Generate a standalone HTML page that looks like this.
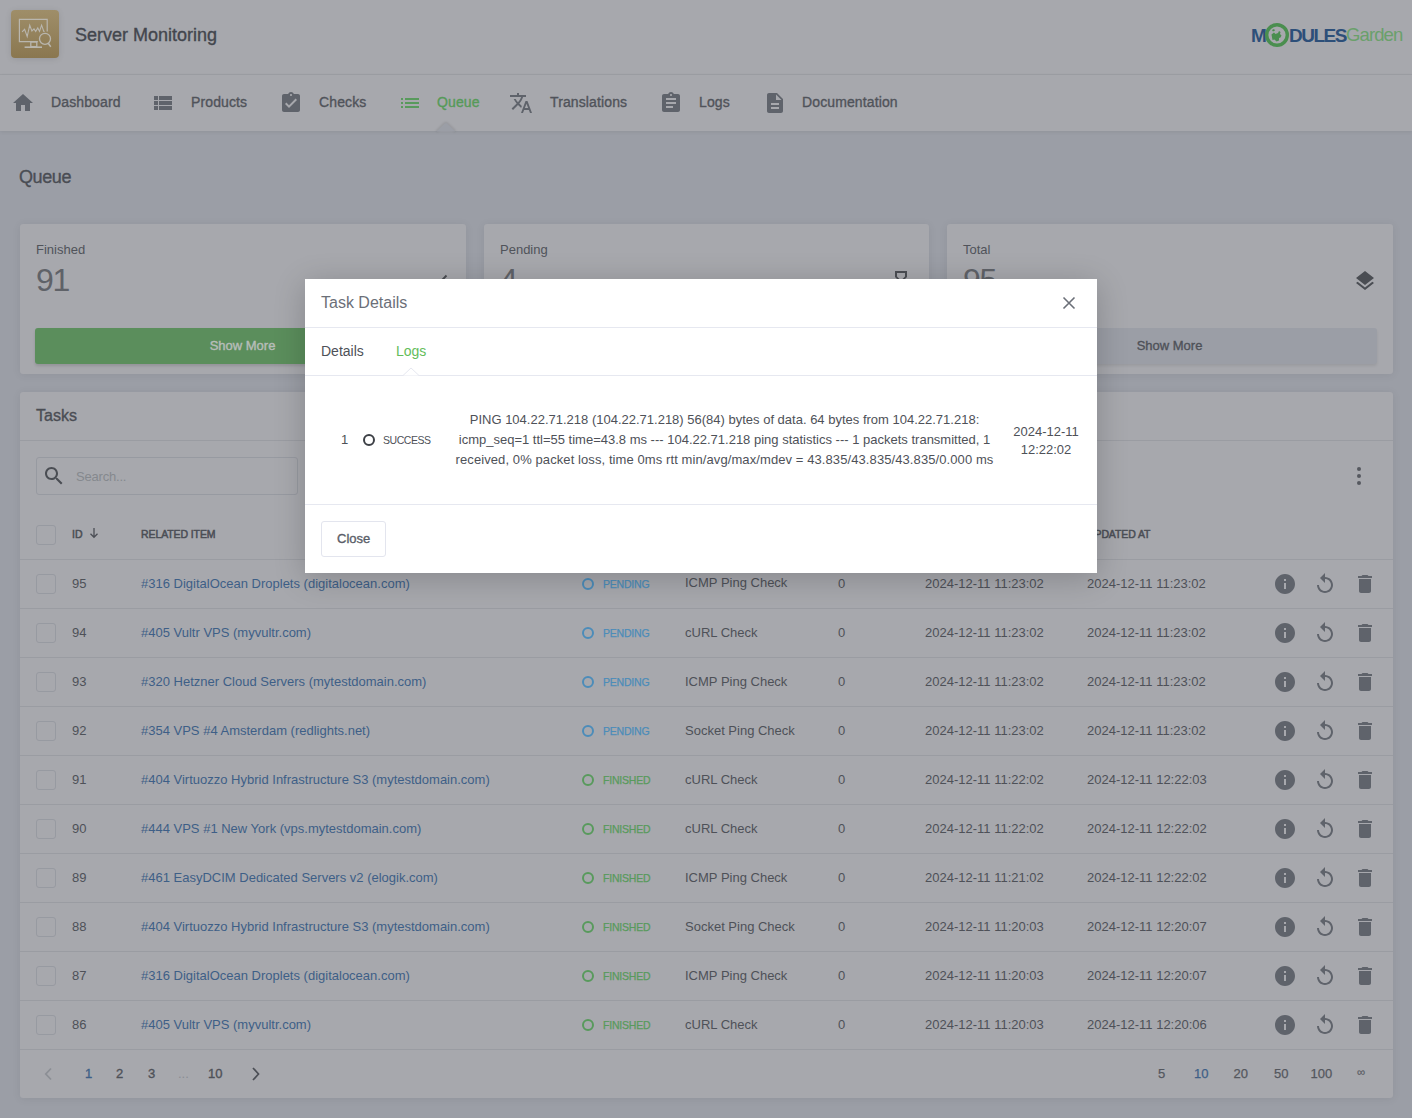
<!DOCTYPE html>
<html><head><meta charset="utf-8">
<style>
*{box-sizing:border-box;margin:0;padding:0}
html,body{width:1412px;height:1118px;overflow:hidden}
body{font-family:"Liberation Sans",sans-serif;background:#9b9ea6;position:relative;color:#4e5158}
.abs{position:absolute}
.t{position:absolute;white-space:nowrap;line-height:1}
.card{position:absolute;background:#a7a8ad;border-radius:3px;box-shadow:0 1px 10px rgba(0,0,0,.065)}
svg{position:absolute;display:block;overflow:visible}
.cb{position:absolute;width:20px;height:20px;border:1px solid #979aa1;border-radius:3px;background:#a7a8ad}
.ring{position:absolute;width:12px;height:12px;border-radius:50%;border:2px solid}
</style></head><body>
<div class="abs" style="left:0;top:0;width:1412px;height:75px;background:#a7a8ad;border-bottom:1px solid #9d9fa4"></div>
<div class="abs" style="left:0;top:75px;width:1412px;height:56px;background:#a7a8ad;box-shadow:0 1px 4px rgba(0,0,0,.08)"></div>
<div class="abs" style="left:11px;top:10px;width:48px;height:48px;border-radius:4px;background:linear-gradient(180deg,#9f8e69,#8a7750);box-shadow:0 1px 6px rgba(0,0,0,.1)">
<svg width="48" height="48" viewBox="0 0 48 48" style="left:0;top:0" fill="none" stroke="#b9b6ae" stroke-width="1.2">
<path d="M26.8 31.6 H8.4 V9.4 H36.2 V21.4"/>
<polyline points="11.1,21.9 13.6,19.3 16.2,26.5 18.7,15.1 20.9,21 23,18.9 24.7,21.4 26.8,18 28.5,21.4 30.6,15.1 32.8,21.4 33.6,21.4" stroke-width="1.1"/>
<rect x="19.8" y="32" width="6" height="4.6" stroke-width="1.3"/>
<line x1="13.6" y1="37.2" x2="31" y2="37.2" stroke-width="1.6"/>
<circle cx="34" cy="28.8" r="5.5" stroke-width="1.3"/>
<line x1="37.2" y1="33.3" x2="39.8" y2="36.7" stroke-width="1.5"/>
</svg></div>
<div class="t" style="left:75px;top:26px;font-size:18px;color:#43464d;-webkit-text-stroke-width:0.35px">Server Monitoring</div>
<div class="abs" style="left:0;top:0;width:1412px;height:75px">
<div class="t" style="left:1251px;top:25.5px;font-size:19px;font-weight:bold;color:#2d4f79;letter-spacing:-1px">M</div>
<svg width="26" height="26" style="left:1264px;top:21.5px" viewBox="0 0 26 26"><circle cx="13" cy="13" r="10.3" fill="none" stroke="#4a8e4f" stroke-width="3.4"/><path d="M7.5 12.5 l2.5 -2 l1.5 1.5 l2.5 -1 l1 -2 l1.5 1 l-0.5 2 l1.5 1.5 l-1 2 l-1.5 0.5 l0 2.5 l-2.5 1 l-2 -2 l-2 0.5 z" fill="#4a8e4f"/><path d="M8 8 l2 -1 l1 1.5 l-2 1z" fill="#4a8e4f"/></svg>
<div class="t" style="left:1289px;top:25.5px;font-size:19px;font-weight:bold;color:#2d4f79;letter-spacing:-1.5px">DULES</div>
<div class="t" style="left:1346px;top:26px;font-size:18.5px;color:#6aa06b;letter-spacing:-0.9px">Garden</div>
</div>
<svg width="24" height="24" viewBox="0 0 24 24" style="left:11px;top:91px"><path d="M10 20v-6h4v6h5v-8h3L12 3 2 12h3v8z" fill="#5f636b"/></svg>
<div class="t" style="left:51px;top:95px;font-size:14px;color:#50535a;-webkit-text-stroke-width:0.35px;letter-spacing:0.12px">Dashboard</div>
<svg width="24" height="24" viewBox="0 0 24 24" style="left:151px;top:91px"><path d="M3 14h4v-4H3v4zm0 5h4v-4H3v4zM3 9h4V5H3v4zm5 5h13v-4H8v4zm0 5h13v-4H8v4zM8 5v4h13V5H8z" fill="#5f636b"/></svg>
<div class="t" style="left:191px;top:95px;font-size:14px;color:#50535a;-webkit-text-stroke-width:0.35px;letter-spacing:0.12px">Products</div>
<svg width="24" height="24" viewBox="0 0 24 24" style="left:279px;top:91px"><path d="M19 3h-4.18C14.4 1.84 13.3 1 12 1c-1.3 0-2.4.84-2.82 2H5c-1.1 0-2 .9-2 2v14c0 1.1.9 2 2 2h14c1.1 0 2-.9 2-2V5c0-1.1-.9-2-2-2zm-7 0c.55 0 1 .45 1 1s-.45 1-1 1-1-.45-1-1 .45-1 1-1zm-2 14l-4-4 1.41-1.41L10 14.17l6.59-6.59L18 9l-8 8z" fill="#5f636b"/></svg>
<div class="t" style="left:319px;top:95px;font-size:14px;color:#50535a;-webkit-text-stroke-width:0.35px;letter-spacing:0.12px">Checks</div>
<svg width="24" height="24" viewBox="0 0 24 24" style="left:398px;top:91px"><path d="M3 13h2v-2H3v2zm0 4h2v-2H3v2zm0-8h2V7H3v2zm4 4h14v-2H7v2zm0 4h14v-2H7v2zM7 7v2h14V7H7z" fill="#589a5c"/></svg>
<div class="t" style="left:437px;top:95px;font-size:14px;color:#569a59;-webkit-text-stroke-width:0.35px;letter-spacing:0.12px">Queue</div>
<svg width="24" height="24" viewBox="0 0 24 24" style="left:509px;top:91px"><path d="M12.87 15.07l-2.54-2.51.03-.03c1.74-1.94 2.98-4.17 3.71-6.53H17V4h-7V2H8v2H1v1.99h11.17C11.5 7.92 10.44 9.75 9 11.35 8.07 10.32 7.3 9.19 6.69 8h-2c.73 1.63 1.73 3.17 2.98 4.56l-5.09 5.02L4 19l5-5 3.11 3.11.76-2.04zM18.5 10h-2L12 22h2l1.12-3h4.75L21 22h2l-4.5-12zm-2.62 7l1.62-4.33L19.12 17h-3.24z" fill="#5f636b"/></svg>
<div class="t" style="left:550px;top:95px;font-size:14px;color:#50535a;-webkit-text-stroke-width:0.35px;letter-spacing:0.12px">Translations</div>
<svg width="24" height="24" viewBox="0 0 24 24" style="left:659px;top:91px"><path d="M19 3h-4.18C14.4 1.84 13.3 1 12 1c-1.3 0-2.4.84-2.82 2H5c-1.1 0-2 .9-2 2v14c0 1.1.9 2 2 2h14c1.1 0 2-.9 2-2V5c0-1.1-.9-2-2-2zm-7 0c.55 0 1 .45 1 1s-.45 1-1 1-1-.45-1-1 .45-1 1-1zm2 14H7v-2h7v2zm3-4H7v-2h10v2zm0-4H7V7h10v2z" fill="#5f636b"/></svg>
<div class="t" style="left:699px;top:95px;font-size:14px;color:#50535a;-webkit-text-stroke-width:0.35px;letter-spacing:0.12px">Logs</div>
<svg width="24" height="24" viewBox="0 0 24 24" style="left:763px;top:91px"><path d="M14 2H6c-1.1 0-1.99.9-1.99 2L4 20c0 1.1.89 2 1.99 2H18c1.1 0 2-.9 2-2V8l-6-6zm2 16H8v-2h8v2zm0-4H8v-2h8v2zm-3-5V3.5L18.5 9H13z" fill="#5f636b"/></svg>
<div class="t" style="left:802px;top:95px;font-size:14px;color:#50535a;-webkit-text-stroke-width:0.35px;letter-spacing:0.12px">Documentation</div>
<svg width="30" height="20" style="left:431px;top:117px" viewBox="0 0 30 20"><defs><filter id="nb" x="-50%" y="-50%" width="200%" height="200%"><feGaussianBlur stdDeviation="1"/></filter></defs><path d="M5.5 14.5 L13.7 6.6 Q14.9 5.5 16.1 6.6 L24.3 14.5" stroke="rgba(0,0,0,.13)" stroke-width="2" fill="none" filter="url(#nb)"/><path d="M5.5 14.5 L13.7 6.6 Q14.9 5.5 16.1 6.6 L24.3 14.5 Z" fill="#9b9ea6"/></svg>
<div class="t" style="left:19px;top:168px;font-size:18px;color:#4a4d54;-webkit-text-stroke-width:0.35px;letter-spacing:-0.4px">Queue</div>
<div class="card" style="left:20px;top:224px;width:446px;height:150px">
<div class="t" style="left:16px;top:19.2px;font-size:13px;color:#50535a;">Finished</div>
<div class="t" style="left:16px;top:40px;font-size:32px;color:#5f6268;letter-spacing:-1.2px">91</div>
<div class="abs" style="left:15px;top:104px;width:415px;height:36px;border-radius:3px;background:#5b8e5c;box-shadow:0 2px 3px rgba(0,0,0,.12)"></div>
<div class="t" style="left:15px;top:115px;width:415px;text-align:center;font-size:13px;font-weight:bold;color:#b7bdb9;font-weight:normal;-webkit-text-stroke-width:0.4px">Show More</div>
</div>
<div class="card" style="left:484px;top:224px;width:445px;height:150px">
<div class="t" style="left:16px;top:19.2px;font-size:13px;color:#50535a;">Pending</div>
<div class="t" style="left:16px;top:40px;font-size:32px;color:#5f6268;letter-spacing:-1.2px">4</div>
<div class="abs" style="left:15px;top:104px;width:414px;height:36px;border-radius:3px;background:#9b9ea6;box-shadow:0 2px 3px rgba(0,0,0,.08)"></div>
<div class="t" style="left:15px;top:115px;width:414px;text-align:center;font-size:13px;font-weight:bold;color:#4e5158;font-weight:normal;-webkit-text-stroke-width:0.35px">Show More</div>
</div>
<div class="card" style="left:947px;top:224px;width:446px;height:150px">
<div class="t" style="left:16px;top:19.2px;font-size:13px;color:#50535a;">Total</div>
<div class="t" style="left:16px;top:40px;font-size:32px;color:#5f6268;letter-spacing:-1.2px">95</div>
<div class="abs" style="left:15px;top:104px;width:415px;height:36px;border-radius:3px;background:#9b9ea6;box-shadow:0 2px 3px rgba(0,0,0,.08)"></div>
<div class="t" style="left:15px;top:115px;width:415px;text-align:center;font-size:13px;font-weight:bold;color:#4e5158;font-weight:normal;-webkit-text-stroke-width:0.35px">Show More</div>
</div>
<svg width="24" height="24" viewBox="0 0 24 24" style="left:1353px;top:269px"><path d="M11.99 18.54l-7.37-5.73L3 14.07l9 7 9-7-1.63-1.27-7.38 5.74zM12 16l7.36-5.73L21 9l-9-7-9 7 1.63 1.27L12 16z" fill="#4a4d53"/></svg>
<svg width="24" height="24" viewBox="0 0 24 24" style="left:426px;top:269px"><path d="M4.5 13 L9.5 18 L20.5 6.5" stroke="#4a4d53" stroke-width="1.9" fill="none"/></svg>
<svg width="24" height="24" viewBox="0 0 24 24" style="left:889px;top:269px"><path d="M6 2v6h.01L6 8.01 10 12l-4 4 .01.01H6V22h12v-5.99h-.01L18 16l-4-4 4-3.99-.01-.01H18V2H6zm10 14.5V20H8v-3.5l4-4 4 4zm-4-5l-4-4V4h8v3.5l-4 4z" fill="#4a4d53"/></svg>
<div class="card" style="left:20px;top:392px;width:1373px;height:706px"></div>
<div class="t" style="left:36px;top:407.7px;font-size:16px;color:#4a4d54;-webkit-text-stroke-width:0.35px">Tasks</div>
<div class="abs" style="left:20px;top:440px;width:1373px;height:1px;background:#9a9ca2"></div>
<div class="abs" style="left:36px;top:457px;width:262px;height:38px;border:1px solid #979aa1;border-radius:3px"></div>
<svg width="24" height="24" viewBox="0 0 24 24" style="left:42px;top:464px"><path d="M15.5 14h-.79l-.28-.27C15.41 12.59 16 11.11 16 9.5 16 5.91 13.09 3 9.5 3S3 5.91 3 9.5 5.91 16 9.5 16c1.61 0 3.09-.59 4.23-1.57l.27.28v.79l5 4.99L20.49 19l-4.99-5zm-6 0C7.01 14 5 11.99 5 9.5S7.01 5 9.5 5 14 7.01 14 9.5 11.99 14 9.5 14z" fill="#4a4d53"/></svg>
<div class="t" style="left:76px;top:470px;font-size:13px;color:#85888e;letter-spacing:-0.2px">Search...</div>
<div class="abs" style="left:1357px;top:467px;width:4px;height:4px;border-radius:50%;background:#55585f"></div>
<div class="abs" style="left:1357px;top:474px;width:4px;height:4px;border-radius:50%;background:#55585f"></div>
<div class="abs" style="left:1357px;top:481px;width:4px;height:4px;border-radius:50%;background:#55585f"></div>
<div class="cb" style="left:36px;top:525px"></div>
<div class="t" style="left:72px;top:528.8px;font-size:10.5px;color:#4b4e55;-webkit-text-stroke-width:0.5px">ID</div>
<svg width="12" height="12" viewBox="0 0 12 12" style="left:88px;top:527px"><path d="M6 1v9M2.5 6.8L6 10.3 9.5 6.8" stroke="#4b4e55" stroke-width="1.3" fill="none"/></svg>
<div class="t" style="left:141px;top:528.8px;font-size:10.5px;color:#4b4e55;-webkit-text-stroke-width:0.5px;letter-spacing:-0.1px">RELATED ITEM</div>
<div class="t" style="left:1087px;top:528.8px;font-size:10.5px;color:#4b4e55;-webkit-text-stroke-width:0.5px;letter-spacing:-0.1px">UPDATED AT</div>
<div class="abs" style="left:20px;top:559px;width:1373px;height:1px;background:#9a9ca2"></div>
<div class="abs" style="left:20px;top:608px;width:1373px;height:1px;background:#9a9ca2"></div>
<div class="abs" style="left:20px;top:657px;width:1373px;height:1px;background:#9a9ca2"></div>
<div class="abs" style="left:20px;top:706px;width:1373px;height:1px;background:#9a9ca2"></div>
<div class="abs" style="left:20px;top:755px;width:1373px;height:1px;background:#9a9ca2"></div>
<div class="abs" style="left:20px;top:804px;width:1373px;height:1px;background:#9a9ca2"></div>
<div class="abs" style="left:20px;top:853px;width:1373px;height:1px;background:#9a9ca2"></div>
<div class="abs" style="left:20px;top:902px;width:1373px;height:1px;background:#9a9ca2"></div>
<div class="abs" style="left:20px;top:951px;width:1373px;height:1px;background:#9a9ca2"></div>
<div class="abs" style="left:20px;top:1000px;width:1373px;height:1px;background:#9a9ca2"></div>
<div class="abs" style="left:20px;top:1049px;width:1373px;height:1px;background:#9a9ca2"></div>
<div class="cb" style="left:36px;top:574px"></div>
<div class="t" style="left:72px;top:577px;font-size:13px;color:#4e5158;">95</div>
<div class="t" style="left:141px;top:577px;font-size:13px;color:#3e5f87;">#316 DigitalOcean Droplets (digitalocean.com)</div>
<div class="ring" style="left:582px;top:578px;border-color:#4c8cb9"></div>
<div class="t" style="left:603px;top:579.4px;font-size:10.5px;color:#4c8cb9;-webkit-text-stroke-width:0.25px;letter-spacing:-0.2px">PENDING</div>
<div class="t" style="left:685px;top:576px;font-size:13px;color:#4e5158;">ICMP Ping Check</div>
<div class="t" style="left:838px;top:577px;font-size:13px;color:#4e5158;">0</div>
<div class="t" style="left:925px;top:577px;font-size:13px;color:#4e5158;">2024-12-11 11:23:02</div>
<div class="t" style="left:1087px;top:577px;font-size:13px;color:#4e5158;">2024-12-11 11:23:02</div>
<svg width="24" height="24" viewBox="0 0 24 24" style="left:1273px;top:572px"><path d="M12 2C6.48 2 2 6.48 2 12s4.48 10 10 10 10-4.48 10-10S17.52 2 12 2zm1 15h-2v-6h2v6zm0-8h-2V7h2v2z" fill="#5f636b"/></svg>
<svg width="24" height="24" viewBox="0 0 24 24" style="left:1313px;top:572px"><path d="M12 5V1L7 6l5 5V7c3.31 0 6 2.69 6 6s-2.69 6-6 6-6-2.69-6-6H4c0 4.42 3.58 8 8 8s8-3.58 8-8-3.58-8-8-8z" fill="#5f636b"/></svg>
<svg width="24" height="24" viewBox="0 0 24 24" style="left:1353px;top:572px"><path d="M6 19c0 1.1.9 2 2 2h8c1.1 0 2-.9 2-2V7H6v12zM19 4h-3.5l-1-1h-5l-1 1H5v2h14V4z" fill="#5f636b"/></svg>
<div class="cb" style="left:36px;top:623px"></div>
<div class="t" style="left:72px;top:626px;font-size:13px;color:#4e5158;">94</div>
<div class="t" style="left:141px;top:626px;font-size:13px;color:#3e5f87;">#405 Vultr VPS (myvultr.com)</div>
<div class="ring" style="left:582px;top:627px;border-color:#4c8cb9"></div>
<div class="t" style="left:603px;top:628.4px;font-size:10.5px;color:#4c8cb9;-webkit-text-stroke-width:0.25px;letter-spacing:-0.2px">PENDING</div>
<div class="t" style="left:685px;top:626px;font-size:13px;color:#4e5158;">cURL Check</div>
<div class="t" style="left:838px;top:626px;font-size:13px;color:#4e5158;">0</div>
<div class="t" style="left:925px;top:626px;font-size:13px;color:#4e5158;">2024-12-11 11:23:02</div>
<div class="t" style="left:1087px;top:626px;font-size:13px;color:#4e5158;">2024-12-11 11:23:02</div>
<svg width="24" height="24" viewBox="0 0 24 24" style="left:1273px;top:621px"><path d="M12 2C6.48 2 2 6.48 2 12s4.48 10 10 10 10-4.48 10-10S17.52 2 12 2zm1 15h-2v-6h2v6zm0-8h-2V7h2v2z" fill="#5f636b"/></svg>
<svg width="24" height="24" viewBox="0 0 24 24" style="left:1313px;top:621px"><path d="M12 5V1L7 6l5 5V7c3.31 0 6 2.69 6 6s-2.69 6-6 6-6-2.69-6-6H4c0 4.42 3.58 8 8 8s8-3.58 8-8-3.58-8-8-8z" fill="#5f636b"/></svg>
<svg width="24" height="24" viewBox="0 0 24 24" style="left:1353px;top:621px"><path d="M6 19c0 1.1.9 2 2 2h8c1.1 0 2-.9 2-2V7H6v12zM19 4h-3.5l-1-1h-5l-1 1H5v2h14V4z" fill="#5f636b"/></svg>
<div class="cb" style="left:36px;top:672px"></div>
<div class="t" style="left:72px;top:675px;font-size:13px;color:#4e5158;">93</div>
<div class="t" style="left:141px;top:675px;font-size:13px;color:#3e5f87;">#320 Hetzner Cloud Servers (mytestdomain.com)</div>
<div class="ring" style="left:582px;top:676px;border-color:#4c8cb9"></div>
<div class="t" style="left:603px;top:677.4px;font-size:10.5px;color:#4c8cb9;-webkit-text-stroke-width:0.25px;letter-spacing:-0.2px">PENDING</div>
<div class="t" style="left:685px;top:675px;font-size:13px;color:#4e5158;">ICMP Ping Check</div>
<div class="t" style="left:838px;top:675px;font-size:13px;color:#4e5158;">0</div>
<div class="t" style="left:925px;top:675px;font-size:13px;color:#4e5158;">2024-12-11 11:23:02</div>
<div class="t" style="left:1087px;top:675px;font-size:13px;color:#4e5158;">2024-12-11 11:23:02</div>
<svg width="24" height="24" viewBox="0 0 24 24" style="left:1273px;top:670px"><path d="M12 2C6.48 2 2 6.48 2 12s4.48 10 10 10 10-4.48 10-10S17.52 2 12 2zm1 15h-2v-6h2v6zm0-8h-2V7h2v2z" fill="#5f636b"/></svg>
<svg width="24" height="24" viewBox="0 0 24 24" style="left:1313px;top:670px"><path d="M12 5V1L7 6l5 5V7c3.31 0 6 2.69 6 6s-2.69 6-6 6-6-2.69-6-6H4c0 4.42 3.58 8 8 8s8-3.58 8-8-3.58-8-8-8z" fill="#5f636b"/></svg>
<svg width="24" height="24" viewBox="0 0 24 24" style="left:1353px;top:670px"><path d="M6 19c0 1.1.9 2 2 2h8c1.1 0 2-.9 2-2V7H6v12zM19 4h-3.5l-1-1h-5l-1 1H5v2h14V4z" fill="#5f636b"/></svg>
<div class="cb" style="left:36px;top:721px"></div>
<div class="t" style="left:72px;top:724px;font-size:13px;color:#4e5158;">92</div>
<div class="t" style="left:141px;top:724px;font-size:13px;color:#3e5f87;">#354 VPS #4 Amsterdam (redlights.net)</div>
<div class="ring" style="left:582px;top:725px;border-color:#4c8cb9"></div>
<div class="t" style="left:603px;top:726.4px;font-size:10.5px;color:#4c8cb9;-webkit-text-stroke-width:0.25px;letter-spacing:-0.2px">PENDING</div>
<div class="t" style="left:685px;top:724px;font-size:13px;color:#4e5158;">Socket Ping Check</div>
<div class="t" style="left:838px;top:724px;font-size:13px;color:#4e5158;">0</div>
<div class="t" style="left:925px;top:724px;font-size:13px;color:#4e5158;">2024-12-11 11:23:02</div>
<div class="t" style="left:1087px;top:724px;font-size:13px;color:#4e5158;">2024-12-11 11:23:02</div>
<svg width="24" height="24" viewBox="0 0 24 24" style="left:1273px;top:719px"><path d="M12 2C6.48 2 2 6.48 2 12s4.48 10 10 10 10-4.48 10-10S17.52 2 12 2zm1 15h-2v-6h2v6zm0-8h-2V7h2v2z" fill="#5f636b"/></svg>
<svg width="24" height="24" viewBox="0 0 24 24" style="left:1313px;top:719px"><path d="M12 5V1L7 6l5 5V7c3.31 0 6 2.69 6 6s-2.69 6-6 6-6-2.69-6-6H4c0 4.42 3.58 8 8 8s8-3.58 8-8-3.58-8-8-8z" fill="#5f636b"/></svg>
<svg width="24" height="24" viewBox="0 0 24 24" style="left:1353px;top:719px"><path d="M6 19c0 1.1.9 2 2 2h8c1.1 0 2-.9 2-2V7H6v12zM19 4h-3.5l-1-1h-5l-1 1H5v2h14V4z" fill="#5f636b"/></svg>
<div class="cb" style="left:36px;top:770px"></div>
<div class="t" style="left:72px;top:773px;font-size:13px;color:#4e5158;">91</div>
<div class="t" style="left:141px;top:773px;font-size:13px;color:#3e5f87;">#404 Virtuozzo Hybrid Infrastructure S3 (mytestdomain.com)</div>
<div class="ring" style="left:582px;top:774px;border-color:#589a5c"></div>
<div class="t" style="left:603px;top:775.4px;font-size:10.5px;color:#589a5c;-webkit-text-stroke-width:0.25px;letter-spacing:-0.2px">FINISHED</div>
<div class="t" style="left:685px;top:773px;font-size:13px;color:#4e5158;">cURL Check</div>
<div class="t" style="left:838px;top:773px;font-size:13px;color:#4e5158;">0</div>
<div class="t" style="left:925px;top:773px;font-size:13px;color:#4e5158;">2024-12-11 11:22:02</div>
<div class="t" style="left:1087px;top:773px;font-size:13px;color:#4e5158;">2024-12-11 12:22:03</div>
<svg width="24" height="24" viewBox="0 0 24 24" style="left:1273px;top:768px"><path d="M12 2C6.48 2 2 6.48 2 12s4.48 10 10 10 10-4.48 10-10S17.52 2 12 2zm1 15h-2v-6h2v6zm0-8h-2V7h2v2z" fill="#5f636b"/></svg>
<svg width="24" height="24" viewBox="0 0 24 24" style="left:1313px;top:768px"><path d="M12 5V1L7 6l5 5V7c3.31 0 6 2.69 6 6s-2.69 6-6 6-6-2.69-6-6H4c0 4.42 3.58 8 8 8s8-3.58 8-8-3.58-8-8-8z" fill="#5f636b"/></svg>
<svg width="24" height="24" viewBox="0 0 24 24" style="left:1353px;top:768px"><path d="M6 19c0 1.1.9 2 2 2h8c1.1 0 2-.9 2-2V7H6v12zM19 4h-3.5l-1-1h-5l-1 1H5v2h14V4z" fill="#5f636b"/></svg>
<div class="cb" style="left:36px;top:819px"></div>
<div class="t" style="left:72px;top:822px;font-size:13px;color:#4e5158;">90</div>
<div class="t" style="left:141px;top:822px;font-size:13px;color:#3e5f87;">#444 VPS #1 New York (vps.mytestdomain.com)</div>
<div class="ring" style="left:582px;top:823px;border-color:#589a5c"></div>
<div class="t" style="left:603px;top:824.4px;font-size:10.5px;color:#589a5c;-webkit-text-stroke-width:0.25px;letter-spacing:-0.2px">FINISHED</div>
<div class="t" style="left:685px;top:822px;font-size:13px;color:#4e5158;">cURL Check</div>
<div class="t" style="left:838px;top:822px;font-size:13px;color:#4e5158;">0</div>
<div class="t" style="left:925px;top:822px;font-size:13px;color:#4e5158;">2024-12-11 11:22:02</div>
<div class="t" style="left:1087px;top:822px;font-size:13px;color:#4e5158;">2024-12-11 12:22:02</div>
<svg width="24" height="24" viewBox="0 0 24 24" style="left:1273px;top:817px"><path d="M12 2C6.48 2 2 6.48 2 12s4.48 10 10 10 10-4.48 10-10S17.52 2 12 2zm1 15h-2v-6h2v6zm0-8h-2V7h2v2z" fill="#5f636b"/></svg>
<svg width="24" height="24" viewBox="0 0 24 24" style="left:1313px;top:817px"><path d="M12 5V1L7 6l5 5V7c3.31 0 6 2.69 6 6s-2.69 6-6 6-6-2.69-6-6H4c0 4.42 3.58 8 8 8s8-3.58 8-8-3.58-8-8-8z" fill="#5f636b"/></svg>
<svg width="24" height="24" viewBox="0 0 24 24" style="left:1353px;top:817px"><path d="M6 19c0 1.1.9 2 2 2h8c1.1 0 2-.9 2-2V7H6v12zM19 4h-3.5l-1-1h-5l-1 1H5v2h14V4z" fill="#5f636b"/></svg>
<div class="cb" style="left:36px;top:868px"></div>
<div class="t" style="left:72px;top:871px;font-size:13px;color:#4e5158;">89</div>
<div class="t" style="left:141px;top:871px;font-size:13px;color:#3e5f87;">#461 EasyDCIM Dedicated Servers v2 (elogik.com)</div>
<div class="ring" style="left:582px;top:872px;border-color:#589a5c"></div>
<div class="t" style="left:603px;top:873.4px;font-size:10.5px;color:#589a5c;-webkit-text-stroke-width:0.25px;letter-spacing:-0.2px">FINISHED</div>
<div class="t" style="left:685px;top:871px;font-size:13px;color:#4e5158;">ICMP Ping Check</div>
<div class="t" style="left:838px;top:871px;font-size:13px;color:#4e5158;">0</div>
<div class="t" style="left:925px;top:871px;font-size:13px;color:#4e5158;">2024-12-11 11:21:02</div>
<div class="t" style="left:1087px;top:871px;font-size:13px;color:#4e5158;">2024-12-11 12:22:02</div>
<svg width="24" height="24" viewBox="0 0 24 24" style="left:1273px;top:866px"><path d="M12 2C6.48 2 2 6.48 2 12s4.48 10 10 10 10-4.48 10-10S17.52 2 12 2zm1 15h-2v-6h2v6zm0-8h-2V7h2v2z" fill="#5f636b"/></svg>
<svg width="24" height="24" viewBox="0 0 24 24" style="left:1313px;top:866px"><path d="M12 5V1L7 6l5 5V7c3.31 0 6 2.69 6 6s-2.69 6-6 6-6-2.69-6-6H4c0 4.42 3.58 8 8 8s8-3.58 8-8-3.58-8-8-8z" fill="#5f636b"/></svg>
<svg width="24" height="24" viewBox="0 0 24 24" style="left:1353px;top:866px"><path d="M6 19c0 1.1.9 2 2 2h8c1.1 0 2-.9 2-2V7H6v12zM19 4h-3.5l-1-1h-5l-1 1H5v2h14V4z" fill="#5f636b"/></svg>
<div class="cb" style="left:36px;top:917px"></div>
<div class="t" style="left:72px;top:920px;font-size:13px;color:#4e5158;">88</div>
<div class="t" style="left:141px;top:920px;font-size:13px;color:#3e5f87;">#404 Virtuozzo Hybrid Infrastructure S3 (mytestdomain.com)</div>
<div class="ring" style="left:582px;top:921px;border-color:#589a5c"></div>
<div class="t" style="left:603px;top:922.4px;font-size:10.5px;color:#589a5c;-webkit-text-stroke-width:0.25px;letter-spacing:-0.2px">FINISHED</div>
<div class="t" style="left:685px;top:920px;font-size:13px;color:#4e5158;">Socket Ping Check</div>
<div class="t" style="left:838px;top:920px;font-size:13px;color:#4e5158;">0</div>
<div class="t" style="left:925px;top:920px;font-size:13px;color:#4e5158;">2024-12-11 11:20:03</div>
<div class="t" style="left:1087px;top:920px;font-size:13px;color:#4e5158;">2024-12-11 12:20:07</div>
<svg width="24" height="24" viewBox="0 0 24 24" style="left:1273px;top:915px"><path d="M12 2C6.48 2 2 6.48 2 12s4.48 10 10 10 10-4.48 10-10S17.52 2 12 2zm1 15h-2v-6h2v6zm0-8h-2V7h2v2z" fill="#5f636b"/></svg>
<svg width="24" height="24" viewBox="0 0 24 24" style="left:1313px;top:915px"><path d="M12 5V1L7 6l5 5V7c3.31 0 6 2.69 6 6s-2.69 6-6 6-6-2.69-6-6H4c0 4.42 3.58 8 8 8s8-3.58 8-8-3.58-8-8-8z" fill="#5f636b"/></svg>
<svg width="24" height="24" viewBox="0 0 24 24" style="left:1353px;top:915px"><path d="M6 19c0 1.1.9 2 2 2h8c1.1 0 2-.9 2-2V7H6v12zM19 4h-3.5l-1-1h-5l-1 1H5v2h14V4z" fill="#5f636b"/></svg>
<div class="cb" style="left:36px;top:966px"></div>
<div class="t" style="left:72px;top:969px;font-size:13px;color:#4e5158;">87</div>
<div class="t" style="left:141px;top:969px;font-size:13px;color:#3e5f87;">#316 DigitalOcean Droplets (digitalocean.com)</div>
<div class="ring" style="left:582px;top:970px;border-color:#589a5c"></div>
<div class="t" style="left:603px;top:971.4px;font-size:10.5px;color:#589a5c;-webkit-text-stroke-width:0.25px;letter-spacing:-0.2px">FINISHED</div>
<div class="t" style="left:685px;top:969px;font-size:13px;color:#4e5158;">ICMP Ping Check</div>
<div class="t" style="left:838px;top:969px;font-size:13px;color:#4e5158;">0</div>
<div class="t" style="left:925px;top:969px;font-size:13px;color:#4e5158;">2024-12-11 11:20:03</div>
<div class="t" style="left:1087px;top:969px;font-size:13px;color:#4e5158;">2024-12-11 12:20:07</div>
<svg width="24" height="24" viewBox="0 0 24 24" style="left:1273px;top:964px"><path d="M12 2C6.48 2 2 6.48 2 12s4.48 10 10 10 10-4.48 10-10S17.52 2 12 2zm1 15h-2v-6h2v6zm0-8h-2V7h2v2z" fill="#5f636b"/></svg>
<svg width="24" height="24" viewBox="0 0 24 24" style="left:1313px;top:964px"><path d="M12 5V1L7 6l5 5V7c3.31 0 6 2.69 6 6s-2.69 6-6 6-6-2.69-6-6H4c0 4.42 3.58 8 8 8s8-3.58 8-8-3.58-8-8-8z" fill="#5f636b"/></svg>
<svg width="24" height="24" viewBox="0 0 24 24" style="left:1353px;top:964px"><path d="M6 19c0 1.1.9 2 2 2h8c1.1 0 2-.9 2-2V7H6v12zM19 4h-3.5l-1-1h-5l-1 1H5v2h14V4z" fill="#5f636b"/></svg>
<div class="cb" style="left:36px;top:1015px"></div>
<div class="t" style="left:72px;top:1018px;font-size:13px;color:#4e5158;">86</div>
<div class="t" style="left:141px;top:1018px;font-size:13px;color:#3e5f87;">#405 Vultr VPS (myvultr.com)</div>
<div class="ring" style="left:582px;top:1019px;border-color:#589a5c"></div>
<div class="t" style="left:603px;top:1020.4px;font-size:10.5px;color:#589a5c;-webkit-text-stroke-width:0.25px;letter-spacing:-0.2px">FINISHED</div>
<div class="t" style="left:685px;top:1018px;font-size:13px;color:#4e5158;">cURL Check</div>
<div class="t" style="left:838px;top:1018px;font-size:13px;color:#4e5158;">0</div>
<div class="t" style="left:925px;top:1018px;font-size:13px;color:#4e5158;">2024-12-11 11:20:03</div>
<div class="t" style="left:1087px;top:1018px;font-size:13px;color:#4e5158;">2024-12-11 12:20:06</div>
<svg width="24" height="24" viewBox="0 0 24 24" style="left:1273px;top:1013px"><path d="M12 2C6.48 2 2 6.48 2 12s4.48 10 10 10 10-4.48 10-10S17.52 2 12 2zm1 15h-2v-6h2v6zm0-8h-2V7h2v2z" fill="#5f636b"/></svg>
<svg width="24" height="24" viewBox="0 0 24 24" style="left:1313px;top:1013px"><path d="M12 5V1L7 6l5 5V7c3.31 0 6 2.69 6 6s-2.69 6-6 6-6-2.69-6-6H4c0 4.42 3.58 8 8 8s8-3.58 8-8-3.58-8-8-8z" fill="#5f636b"/></svg>
<svg width="24" height="24" viewBox="0 0 24 24" style="left:1353px;top:1013px"><path d="M6 19c0 1.1.9 2 2 2h8c1.1 0 2-.9 2-2V7H6v12zM19 4h-3.5l-1-1h-5l-1 1H5v2h14V4z" fill="#5f636b"/></svg>
<svg width="10" height="14" style="left:43px;top:1067px"><path d="M8 1.5L2.8 7 8 12.5" stroke="#8c8f95" stroke-width="1.8" fill="none"/></svg>
<div class="t" style="left:85px;top:1067px;font-size:13px;color:#3e5f87;-webkit-text-stroke-width:0.35px">1</div>
<div class="t" style="left:116px;top:1067px;font-size:13px;color:#4e5158;-webkit-text-stroke-width:0.35px">2</div>
<div class="t" style="left:148px;top:1067px;font-size:13px;color:#4e5158;-webkit-text-stroke-width:0.35px">3</div>
<div class="t" style="left:208px;top:1067px;font-size:13px;color:#4e5158;-webkit-text-stroke-width:0.35px">10</div>
<div class="t" style="left:178px;top:1067px;font-size:13px;color:#8a8d94;">...</div>
<svg width="10" height="14" style="left:251px;top:1067px"><path d="M2 1L7.5 7 2 13" stroke="#4b4e55" stroke-width="1.7" fill="none"/></svg>
<div class="t" style="left:1158px;top:1067px;font-size:13px;color:#54575e;-webkit-text-stroke-width:0.25px">5</div>
<div class="t" style="left:1194px;top:1067px;font-size:13px;color:#3e5f87;-webkit-text-stroke-width:0.25px">10</div>
<div class="t" style="left:1233.5px;top:1067px;font-size:13px;color:#54575e;-webkit-text-stroke-width:0.25px">20</div>
<div class="t" style="left:1274px;top:1067px;font-size:13px;color:#54575e;-webkit-text-stroke-width:0.25px">50</div>
<div class="t" style="left:1310.5px;top:1067px;font-size:13px;color:#54575e;-webkit-text-stroke-width:0.25px">100</div>
<div class="t" style="left:1357px;top:1066.5px;font-size:11.5px;color:#5a5d64;-webkit-text-stroke-width:0.2px">∞</div>
<div class="abs" style="left:305px;top:279px;width:792px;height:294px;background:#fff;box-shadow:0 5px 30px rgba(0,0,0,.2)">
<div class="t" style="left:16px;top:15.5px;font-size:16px;color:#6b6f78;">Task Details</div>
<svg width="14" height="14" style="left:757px;top:17px"><path d="M1.5 1.5L12.5 12.5M12.5 1.5L1.5 12.5" stroke="#6b6f78" stroke-width="1.6"/></svg>
<div class="abs" style="left:0;top:48px;width:792px;height:1px;background:#e6e8f0"></div>
<div class="t" style="left:16px;top:65px;font-size:14px;color:#4e5158;">Details</div>
<div class="t" style="left:91px;top:65px;font-size:14px;color:#63bd5a;">Logs</div>
<div class="abs" style="left:0;top:96px;width:792px;height:1px;background:#e6e8f0"></div>
<svg width="16" height="9" style="left:98px;top:88px"><path d="M0 8.5 L8 1 L16 8.5" stroke="#e6e8f0" stroke-width="1" fill="#fff"/></svg>
<div class="t" style="left:36px;top:154px;font-size:13px;color:#4e5158;">1</div>
<div class="ring" style="left:58px;top:155px;border-color:#3d4046"></div>
<div class="t" style="left:78px;top:156px;font-size:10.5px;color:#4e5158;letter-spacing:-0.45px">SUCCESS</div>
<div class="t" style="left:119.5px;top:134px;width:600px;text-align:center;font-size:13px;color:#4e5158;letter-spacing:0">PING 104.22.71.218 (104.22.71.218) 56(84) bytes of data. 64 bytes from 104.22.71.218:</div>
<div class="t" style="left:119.5px;top:154px;width:600px;text-align:center;font-size:13px;color:#4e5158;letter-spacing:0">icmp_seq=1 ttl=55 time=43.8 ms --- 104.22.71.218 ping statistics --- 1 packets transmitted, 1</div>
<div class="t" style="left:119.5px;top:174px;width:600px;text-align:center;font-size:13px;color:#4e5158;letter-spacing:0.09px">received, 0% packet loss, time 0ms rtt min/avg/max/mdev = 43.835/43.835/43.835/0.000 ms</div>
<div class="t" style="left:700px;top:146px;width:82px;text-align:center;font-size:13px;color:#4e5158">2024-12-11</div>
<div class="t" style="left:700px;top:163.5px;width:82px;text-align:center;font-size:13px;color:#4e5158">12:22:02</div>
<div class="abs" style="left:0;top:225px;width:792px;height:1px;background:#e6e8f0"></div>
<div class="abs" style="left:16px;top:242px;width:65px;height:36px;border:1px solid #e3e5ee;border-radius:3px"></div>
<div class="t" style="left:32px;top:253px;font-size:13px;color:#5a5e68;-webkit-text-stroke-width:0.35px">Close</div>
</div>
</body></html>
